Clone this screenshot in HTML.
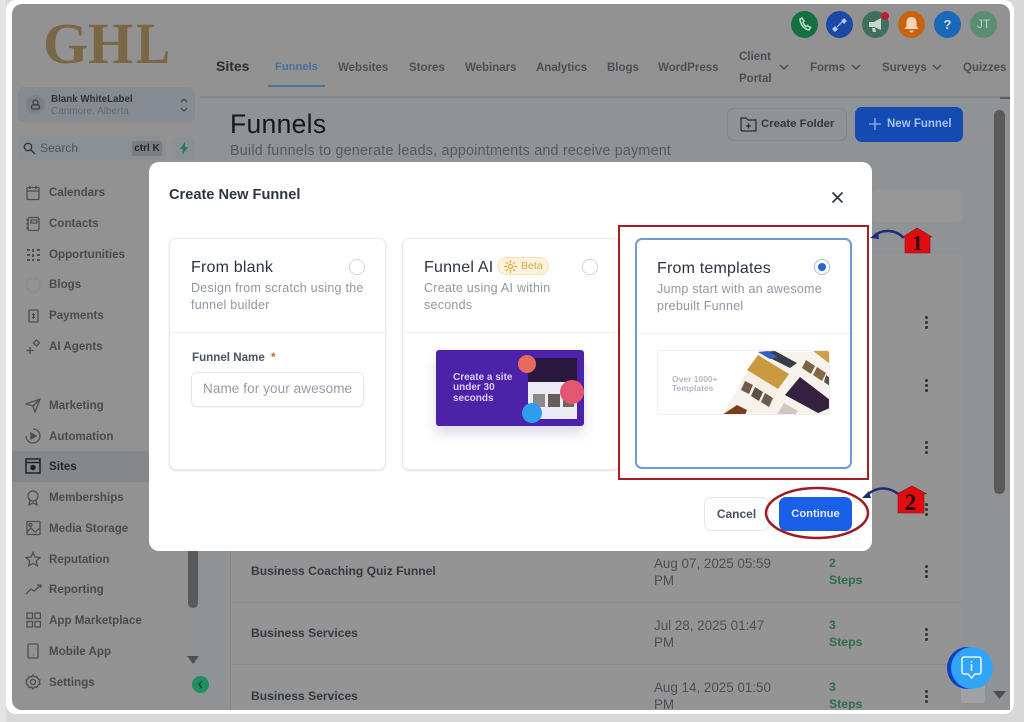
<!DOCTYPE html>
<html><head><meta charset="utf-8"><title>Create New Funnel</title>
<style>
html,body{margin:0;padding:0;width:1024px;height:722px;overflow:hidden;background:#d8d8d8;font-family:"Liberation Sans",sans-serif}
.a{position:absolute;white-space:nowrap}
#root{position:relative;width:1024px;height:722px;overflow:hidden;background:#d8d8d8}
.win{position:absolute;left:6px;top:0;width:1008px;height:714px;background:#fff;border-radius:10px}
.app{position:absolute;left:12px;top:4px;width:998px;height:706px;background:#929292;border-radius:10px;overflow:hidden}
.nav{font-size:11.5px;font-weight:700;color:#4a4f55}
.side{font-size:11.6px;font-weight:700;color:#484c50;left:49px}
.ic{position:absolute;fill:none;stroke:#4c4f53;stroke-width:1.3}
.row{color:#333a42;font-size:12.1px;font-weight:700;left:251px}
.date{color:#4b5057;font-size:13.4px;left:654px;line-height:17px}
.steps{color:#2f6c4a;font-size:12.3px;font-weight:700;left:829px;line-height:17px}
.dots{position:absolute;width:3px;height:3px;border-radius:50%;background:#2c3036;box-shadow:0 5px #2c3036,0 10px #2c3036;left:925px}
.circ{position:absolute;width:27px;height:27px;border-radius:50%;top:11px;color:#d8e4dc;text-align:center;font-size:12px;line-height:27px;font-weight:700}
.card{position:absolute;background:#fff;border:1px solid #e8eaed;border-radius:7px;box-shadow:0 1px 2px rgba(0,0,0,.12);box-sizing:border-box}
.ct{font-size:16px;font-weight:500;color:#2b3440;letter-spacing:.2px}
.cd{font-size:12.5px;color:#8f97a3;line-height:17px;letter-spacing:.25px}
.line{position:absolute;height:1px;background:#eef0f2}
.radio{position:absolute;width:14px;height:14px;border:1px solid #d0d4da;border-radius:50%;background:#fff}
.logo{font:700 58px/60px 'Liberation Serif',serif;color:#7a6745;top:14px}
</style></head><body>
<div id="root">
<div class="win"></div>
<div class="a" style="left:0;top:0;width:6px;height:722px;background:#e4e4e4"></div>
<div class="app"></div>

<!-- main bg areas -->
<div class="a" style="left:200px;top:97px;width:810px;height:613px;background:#8f9396"></div>
<div class="a" style="left:200px;top:96px;width:810px;height:2px;background:#85888a"></div>
<div class="a" style="left:1000px;top:97px;width:10px;height:2px;background:#5a5a5a"></div>
<div class="a" style="left:12px;top:451px;width:137px;height:31px;background:#85878a"></div>
<div class="a" style="left:230px;top:254px;width:732px;height:456px;background:#949494"></div>
<div class="a" style="left:230px;top:540px;width:1px;height:170px;background:#858585"></div>
<div class="a" style="left:231px;top:602px;width:731px;height:1px;background:#8c8c8c"></div>
<div class="a" style="left:231px;top:664px;width:731px;height:1px;background:#8c8c8c"></div>
<div class="a" style="left:872px;top:189px;width:90px;height:33px;background:#969696;border-radius:5px"></div>

<!-- logo -->
<div class="a logo" style="left:43px">G</div>
<div class="a logo" style="left:88px">H</div>
<div class="a logo" style="left:136px;transform:scaleX(.88);transform-origin:left">L</div>

<!-- top nav -->
<div class="a" style="left:216px;top:58px;font-size:14px;font-weight:700;color:#2a2e33">Sites</div>
<div class="a nav" style="left:275px;top:61px;color:#4a6f9e;font-size:11.2px">Funnels</div>
<div class="a" style="left:268px;top:85px;width:57px;height:2px;background:#4d7394"></div>
<div class="a nav" style="left:338px;top:62px">Websites</div>
<div class="a nav" style="left:409px;top:62px">Stores</div>
<div class="a nav" style="left:465px;top:62px">Webinars</div>
<div class="a nav" style="left:536px;top:62px">Analytics</div>
<div class="a nav" style="left:607px;top:62px">Blogs</div>
<div class="a nav" style="left:658px;top:62px">WordPress</div>
<div class="a nav" style="left:739px;top:46px;line-height:22px">Client<br>Portal</div>
<div class="a nav" style="left:810px;top:62px">Forms</div>
<div class="a nav" style="left:882px;top:62px">Surveys</div>
<div class="a nav" style="left:963px;top:62px">Quizzes</div>
<svg class="a" style="left:778px;top:62px" width="170" height="12" fill="none" stroke="#4a4f55" stroke-width="1.5"><path d="M2 3l4 4 4-4M74 3l4 4 4-4M155 3l4 4 4-4"/></svg>

<!-- top icons -->
<div class="circ" style="left:791px;background:#15703f"><svg width="27" height="27" fill="none" stroke="#b9d6c4" stroke-width="1.6"><path d="M9 8c0 5 4 10 9 11l1.500-2.500-3-2-1.500 1c-1.500-1-2.500-2.500-3-4l1-1.500-2-3z"/></svg></div>
<div class="circ" style="left:826px;background:#1b49a6"><svg width="27" height="27" fill="#b8c8e8"><path d="M9 15l3 3-3 3-3-3zM18 7l3 3-3 3-3-3z"/><path d="M11 16l5-5" stroke="#b8c8e8"/></svg></div>
<div class="circ" style="left:862px;background:#3f6f5d"><svg width="27" height="27" fill="#c8d8d0"><path d="M7 11h5l7-4v12l-7-3H7zM10 17h3l1 4h-3z"/></svg></div>
<div class="a" style="left:881px;top:12px;width:8px;height:8px;border-radius:50%;background:#bd1f2d"></div>
<div class="circ" style="left:898px;background:#c8620c"><svg width="27" height="27" fill="#f1d5b8"><path d="M13.500 6c3 0 5 2 5 5v4l2 3H6.500l2-3v-4c0-3 2-5 5-5zM11.500 19.500h4a2 2 0 0 1-4 0z"/></svg></div>
<div class="circ" style="left:934px;background:#1b68b8;font-size:13px;color:#cfe0f2">?</div>
<div class="circ" style="left:970px;background:#5a8d72;color:#bcd2c5;font-weight:400;font-size:12px">JT</div>

<!-- location box -->
<div class="a" style="left:18px;top:87px;width:177px;height:35px;background:#858b90;border-radius:6px"></div>
<div class="a" style="left:26px;top:95px;width:19px;height:19px;border-radius:50%;background:#7c8186"></div>
<svg class="ic" style="left:30px;top:99px;stroke:#3d4145" width="11" height="11"><circle cx="5.500" cy="3.500" r="2.500"/><rect x="1.500" y="6" width="8" height="4" rx="1.500"/></svg>
<div class="a" style="left:51px;top:94px;font-size:9.800px;font-weight:700;color:#2f3337">Blank WhiteLabel</div>
<div class="a" style="left:51px;top:106px;font-size:10px;color:#666b70">Canmore, Alberta</div>
<svg class="a" style="left:178px;top:97px" width="12" height="16" fill="none" stroke="#44484c" stroke-width="1.200"><path d="M3 5l3-3 3 3M3 11l3 3 3-3"/></svg>

<!-- search -->
<div class="a" style="left:18px;top:136px;width:148px;height:24px;background:#8b9094;border-radius:5px"></div>
<svg class="ic" style="left:23px;top:142px;stroke:#33373b" width="13" height="13"><circle cx="5" cy="5" r="3.700"/><path d="M8 8l4 4"/></svg>
<div class="a" style="left:40px;top:141px;font-size:12px;color:#50555a">Search</div>
<div class="a" style="left:132px;top:141px;width:30px;height:15px;background:#7a7e82;border-radius:2px;text-align:center;font-size:10px;line-height:15px;font-weight:700;color:#25282b">ctrl K</div>
<div class="a" style="left:172px;top:137px;width:23px;height:23px;background:#8b9094;border-radius:5px"></div>
<svg class="a" style="left:178px;top:142px" width="12" height="14" fill="#267a55"><path d="M7 0L2 7h3l-1 6 6-8H7z"/></svg>

<!-- sidebar -->
<div class="a side" style="top:186px">Calendars</div>
<div class="a side" style="top:217px">Contacts</div>
<div class="a side" style="top:248px">Opportunities</div>
<div class="a side" style="top:278px">Blogs</div>
<div class="a side" style="top:309px">Payments</div>
<div class="a side" style="top:340px">AI Agents</div>
<div class="a side" style="top:399px">Marketing</div>
<div class="a side" style="top:430px">Automation</div>
<div class="a side" style="top:460px;color:#24272b">Sites</div>
<div class="a side" style="top:491px">Memberships</div>
<div class="a side" style="top:522px">Media Storage</div>
<div class="a side" style="top:553px">Reputation</div>
<div class="a side" style="top:583px">Reporting</div>
<div class="a side" style="top:614px">App Marketplace</div>
<div class="a side" style="top:645px">Mobile App</div>
<div class="a side" style="top:676px">Settings</div>

<svg class="ic" style="left:25px;top:185px" width="16" height="16"><rect x="2" y="2.500" width="12" height="12" rx="1"/><path d="M2 6h12M5 1v3M11 1v3"/></svg>
<svg class="ic" style="left:25px;top:216px" width="16" height="16"><rect x="3" y="1.500" width="11" height="13" rx="1.500"/><path d="M1 4h3M1 8h3M1 12h3M6 4h6v3H6z"/></svg>
<svg class="ic" style="left:25px;top:247px;stroke-width:2" width="17" height="16"><path d="M2 3h3M2 8h3M2 13h3M12 3h3M12 8h3M12 13h3M8 2v3M8 7v3M8 12v2"/></svg>
<svg class="ic" style="left:25px;top:277px;stroke:#888b8e" width="16" height="16"><circle cx="8" cy="8" r="7"/></svg>
<svg class="ic" style="left:27px;top:308px" width="13" height="16"><rect x="2" y="2" width="9" height="12" rx="1"/><path d="M6.500 5v6M5 6.500h3M5 9.500h3"/></svg>
<svg class="ic" style="left:25px;top:338px" width="17" height="17"><path d="M5 9v7M1.500 12.500h7M11.500 2l3 3-3 3-3-3z"/></svg>
<svg class="ic" style="left:25px;top:397px" width="16" height="16"><path d="M1 7l14-5-5 13-2-6zM8 9l7-7"/></svg>
<svg class="ic" style="left:25px;top:428px" width="16" height="16"><path d="M8 1a7 7 0 1 1-7 7"/><path d="M6 5l5 3-5 3z" fill="#4c4f53"/></svg>
<svg class="ic" style="left:25px;top:458px;stroke:#1f2226;stroke-width:1.500" width="16" height="16"><rect x="1" y="1" width="14" height="14"/><path d="M1 4.500h14"/><circle cx="8" cy="9.500" r="2" fill="#1f2226"/></svg>
<svg class="ic" style="left:26px;top:490px" width="14" height="16"><circle cx="7" cy="6" r="5"/><path d="M4 10l-1 5 4-2 4 2-1-5"/></svg>
<svg class="ic" style="left:26px;top:520px" width="15" height="16"><rect x="1" y="1.500" width="13" height="13"/><circle cx="4.500" cy="5" r="1.500"/><path d="M1 12l4-4 4 4 5-4"/></svg>
<svg class="ic" style="left:25px;top:551px" width="16" height="16"><path d="M8 1.500l2 4.500 5 .5-3.700 3.300 1 5L8 12.300l-4.300 2.500 1-5L1 6.500 6 6z"/></svg>
<svg class="ic" style="left:25px;top:583px" width="17" height="13"><path d="M1 11l5-5 3 2 7-6M12 2h4v3"/></svg>
<svg class="ic" style="left:26px;top:612px" width="15" height="16"><rect x="1" y="1" width="5.500" height="5.500"/><rect x="9" y="1" width="5.500" height="5.500"/><rect x="1" y="9.500" width="5.500" height="5.500"/><rect x="9" y="9.500" width="5.500" height="5.500"/></svg>
<svg class="ic" style="left:27px;top:643px" width="13" height="16"><rect x="1" y="1" width="10" height="14" rx="1"/><path d="M6 12h.5"/></svg>
<svg class="ic" style="left:25px;top:674px" width="16" height="16"><circle cx="8" cy="8" r="2.500"/><path d="M8 1l1.500 2 2.500-.5 1 2.400 2 1.100-.8 2 .8 2-2 1.100-1 2.400-2.500-.5L8 15l-1.500-2-2.500.5-1-2.400-2-1.100.8-2-.8-2 2-1.100 1-2.400 2.500.5z"/></svg>

<!-- sidebar scroll -->
<div class="a" style="left:188px;top:540px;width:10px;height:68px;border-radius:5px;background:#5a5a5a"></div>
<svg class="a" style="left:186px;top:655px" width="14" height="10" fill="#4f4f4f"><path d="M1 1h12L7 9z"/></svg>
<div class="a" style="left:192px;top:676px;width:17px;height:17px;border-radius:50%;background:#1f8f5f"></div>
<svg class="a" style="left:197px;top:680px" width="7" height="9" fill="none" stroke="#0d3f29" stroke-width="1.300"><path d="M5 1L2 4.500 5 8"/></svg>

<!-- page head -->
<div class="a" style="left:230px;top:109px;font-size:26.500px;color:#15181c;letter-spacing:.3px">Funnels</div>
<div class="a" style="left:230px;top:143px;font-size:14.300px;color:#54595f;letter-spacing:.22px">Build funnels to generate leads, appointments and receive payment</div>
<div class="a" style="left:727px;top:108px;width:120px;height:33px;background:#909294;border:1px solid #858688;border-radius:7px;box-sizing:border-box"></div>
<svg class="ic" style="left:740px;top:116px;stroke:#2a2d31;stroke-width:1.200" width="17" height="17"><path d="M1 14V2h5l2 2h8v11H2zM8.500 7.500v5M6 10h5"/></svg>
<div class="a" style="left:761px;top:118px;font-size:11.400px;font-weight:700;color:#34383d">Create Folder</div>
<div class="a" style="left:855px;top:107px;width:108px;height:35px;background:#134bb3;border-radius:7px"></div>
<svg class="a" style="left:868px;top:117px" width="14" height="14" stroke="#9bb4df" stroke-width="1.300"><path d="M7 1v12M1 7h12"/></svg>
<div class="a" style="left:887px;top:118px;font-size:11.500px;font-weight:700;color:#a8c0ea">New Funnel</div>

<!-- table rows -->
<div class="a row" style="top:564px">Business Coaching Quiz Funnel</div>
<div class="a date" style="top:555px">Aug 07, 2025 05:59<br>PM</div>
<div class="a steps" style="top:555px">2<br>Steps</div>
<div class="a row" style="top:626px">Business Services</div>
<div class="a date" style="top:617px">Jul 28, 2025 01:47<br>PM</div>
<div class="a steps" style="top:617px">3<br>Steps</div>
<div class="a row" style="top:689px">Business Services</div>
<div class="a date" style="top:679px;height:31px;overflow:hidden">Aug 14, 2025 01:50<br>PM</div>
<div class="a steps" style="top:679px;height:31px;overflow:hidden">3<br>Steps</div>
<div class="dots" style="top:316px"></div>
<div class="dots" style="top:379px"></div>
<div class="dots" style="top:441px"></div>
<div class="dots" style="top:503px"></div>
<div class="dots" style="top:565px"></div>
<div class="dots" style="top:628px"></div>
<div class="dots" style="top:690px"></div>

<!-- main scroll -->
<div class="a" style="left:994px;top:110px;width:11px;height:384px;border-radius:5px;background:#5a5a5a"></div>
<svg class="a" style="left:992px;top:690px" width="15" height="10" fill="#4f4f4f"><path d="M1 1h13L7.500 9z"/></svg>

<!-- modal -->
<div class="a" style="left:149px;top:162px;width:723px;height:389px;background:#fff;border-radius:10px"></div>
<div class="a" style="left:169px;top:187px;font-size:14.600px;font-weight:700;color:#2d3641">Create New Funnel</div>
<svg class="a" style="left:831px;top:191px" width="13" height="13" stroke="#2d3641" stroke-width="1.700"><path d="M1.500 1.500l10 10M11.500 1.500l-10 10"/></svg>

<div class="card" style="left:169px;top:238px;width:217px;height:232px"></div>
<div class="a ct" style="left:191px;top:259px">From blank</div>
<div class="radio" style="left:349px;top:259px"></div>
<div class="a cd" style="left:191px;top:280px">Design from scratch using the<br>funnel builder</div>
<div class="line" style="left:170px;top:332px;width:215px"></div>
<div class="a" style="left:192px;top:351px;font-size:11.600px;font-weight:700;color:#4a5360">Funnel Name <span style="color:#d2603a;margin-left:3px">*</span></div>
<div class="a" style="left:191px;top:372px;width:173px;height:35px;border:1px solid #e4e6ea;border-radius:6px;box-sizing:border-box;box-shadow:0 1px 1px rgba(0,0,0,.05)"></div>
<div class="a" style="left:203px;top:381px;font-size:13.500px;color:#949ba6;letter-spacing:.1px">Name for your awesome</div>

<div class="card" style="left:402px;top:238px;width:218px;height:232px"></div>
<div class="a ct" style="left:424px;top:259px">Funnel AI</div>
<div class="a" style="left:497px;top:257px;width:52px;height:18px;border-radius:9px;background:#fdf3dc;border:1px solid #f6e3b5;box-sizing:border-box"></div>
<svg class="a" style="left:504px;top:260px" width="13" height="13" fill="none" stroke="#e0a93b" stroke-width="1.200"><circle cx="6.500" cy="6.500" r="2"/><path d="M6.500 0v3M6.500 10v3M0 6.500h3M10 6.500h3M2 2l2 2M9 9l2 2M2 11l2-2M9 4l2-2"/></svg>
<div class="a" style="left:521px;top:260px;font-size:10.500px;color:#dda635;font-weight:400">Beta</div>
<div class="radio" style="left:582px;top:259px"></div>
<div class="a cd" style="left:424px;top:280px">Create using AI within<br>seconds</div>
<div class="line" style="left:403px;top:332px;width:216px"></div>

<!-- AI image -->
<div class="a" style="left:436px;top:350px;width:148px;height:76px;background:#4b22a8;border-radius:3px;box-shadow:0 8px 12px rgba(70,60,120,.18);overflow:hidden">
  <div class="a" style="left:17px;top:23px;font-size:10px;line-height:10.300px;font-weight:700;color:#d9d0f8">Create a site<br>under 30<br>seconds</div>
  <div class="a" style="left:92px;top:8px;width:49px;height:24px;background:#2a1740"></div>
  <div class="a" style="left:92px;top:32px;width:49px;height:37px;background:#eceaf2"></div>
  <div class="a" style="left:97px;top:44px;width:12px;height:13px;background:#8a8a8a"></div>
  <div class="a" style="left:112px;top:44px;width:12px;height:13px;background:#665f58"></div>
  <div class="a" style="left:127px;top:44px;width:11px;height:13px;background:#6f6460"></div>
  <div class="a" style="left:82px;top:5px;width:18px;height:18px;border-radius:50%;background:#e66a5e"></div>
  <div class="a" style="left:124px;top:30px;width:24px;height:24px;border-radius:50%;background:#e2566f"></div>
  <div class="a" style="left:86px;top:53px;width:20px;height:20px;border-radius:50%;background:#2f9dee"></div>
</div>

<div class="a" style="left:635px;top:238px;width:217px;height:231px;border:2px solid #6f9bd4;border-radius:7px;box-sizing:border-box;background:#fff"></div>
<div class="a ct" style="left:657px;top:260px">From templates</div>
<div class="a" style="left:814px;top:259px;width:16px;height:16px;border:1px solid #9fbbe6;border-radius:50%;background:#fff;box-sizing:border-box"></div>
<div class="a" style="left:818px;top:263px;width:8px;height:8px;border-radius:50%;background:#2563d8"></div>
<div class="a cd" style="left:657px;top:281px">Jump start with an awesome<br>prebuilt Funnel</div>
<div class="line" style="left:638px;top:333px;width:212px"></div>

<!-- template image -->
<div class="a" style="left:657px;top:350px;width:173px;height:65px;border:1px solid #eceef1;border-radius:3px;box-sizing:border-box;overflow:hidden;background:#fff">
  <div class="a" style="left:14px;top:24px;font-size:8.500px;line-height:9px;font-weight:700;color:#b4b8c6">Over 1000+<br>Templates</div>
  <svg class="a" style="left:-1px;top:-1px" width="173" height="65" viewBox="657 350 173 65">
    <polygon points="722,415 760,352 830,352 830,415" fill="#f7f2ea"/>
    <polygon points="758,352 775,351 797,363 790,368" fill="#383c46"/>
    <polygon points="758,352 768,351 778,357 770,359" fill="#2e62c4"/>
    <polygon points="758,355 789,374 778,389 747,370" fill="#c99a3e"/>
    <polygon points="743,378 748,372 778,391 770,408 738,390" fill="#f6efe3"/>
    <polygon points="745,381 753,385 749,394 741,390" fill="#6b5c4e"/>
    <polygon points="755,387 763,392 759,401 751,396" fill="#5b5048"/>
    <polygon points="765,393 773,398 769,407 761,402" fill="#6b5c4e"/>
    <polygon points="806,360 815,366 811,374 802,368" fill="#7a6246"/>
    <polygon points="817,367 826,373 822,381 813,375" fill="#806848"/>
    <polygon points="826,375 830,378 830,386 824,382" fill="#5b5048"/>
    <polygon points="812,350 830,350 830,364" fill="#cf9e45"/>
    <polygon points="800,377 830,400 830,408 818,413 785,395" fill="#34203f"/>
    <polygon points="722,415 737,405 747,410 745,415" fill="#7d3b1e"/>
    <polygon points="777,415 784,403 798,411 795,415" fill="#cfc8c0"/>
  </svg>
</div>

<!-- footer buttons -->
<div class="a" style="left:704px;top:497px;width:65px;height:34px;border:1px solid #e2e4e8;border-radius:7px;box-sizing:border-box;text-align:center;font-size:12px;font-weight:700;line-height:32px;color:#49525d">Cancel</div>
<div class="a" style="left:779px;top:497px;width:73px;height:34px;background:#1a5fe8;border-radius:7px;text-align:center;font-size:11.200px;font-weight:700;line-height:34px;color:#e3ecfc">Continue</div>

<!-- annotations -->
<div class="a" style="left:618px;top:225px;width:251px;height:255px;border:2px solid #a71e26;box-sizing:border-box"></div>
<svg class="a" style="left:0;top:0" width="1024" height="722" fill="none">
  <ellipse cx="817" cy="513" rx="51" ry="25" stroke="#a01a22" stroke-width="2.500"/>
  <path d="M904 238C895 229 882 229 874 236" stroke="#1b2d78" stroke-width="2.500"/>
  <path d="M870 238l8-6 1 7z" fill="#1b2d78"/>
  <path d="M917 228l15 9h-2v16h-25V237h-2z" fill="#e00c12" stroke="#8c1014" stroke-width=".6"/>
  <text x="917.500" y="250" text-anchor="middle" font-family="Liberation Serif,serif" font-size="21" font-weight="700" fill="#200">1</text>
  <path d="M898 494C888 486 876 487 867 495" stroke="#1b2d78" stroke-width="2.500"/>
  <path d="M862 498l7-7 2 7z" fill="#1b2d78"/>
  <path d="M912 486l15 8h-3v19h-26V494h-1z" fill="#e00c12" stroke="#8c1014" stroke-width=".6"/>
  <text x="910.500" y="510" text-anchor="middle" font-family="Liberation Serif,serif" font-size="23" font-weight="700" fill="#200">2</text>
</svg>

<!-- chat bubble -->
<div class="a" style="left:961px;top:683px;width:24px;height:20px;background:#a2a2a2;border-radius:3px"></div>
<div class="a" style="left:947px;top:647px;width:40px;height:42px;border-radius:50%;background:#0e3fc2"></div>
<div class="a" style="left:951px;top:647px;width:42px;height:42px;border-radius:50%;background:#31a4f8"></div>
<svg class="a" style="left:960px;top:655px" width="25" height="27" fill="none" stroke="#e8f6ff" stroke-width="1.500"><path d="M4 2h15a2 2 0 0 1 2 2v13a2 2 0 0 1-2 2h-4l-3.500 4L8 19H4a2 2 0 0 1-2-2V4a2 2 0 0 1 2-2z"/><path d="M11.500 9v7M11.500 6v1.500"/></svg>
</div>
</body></html>
